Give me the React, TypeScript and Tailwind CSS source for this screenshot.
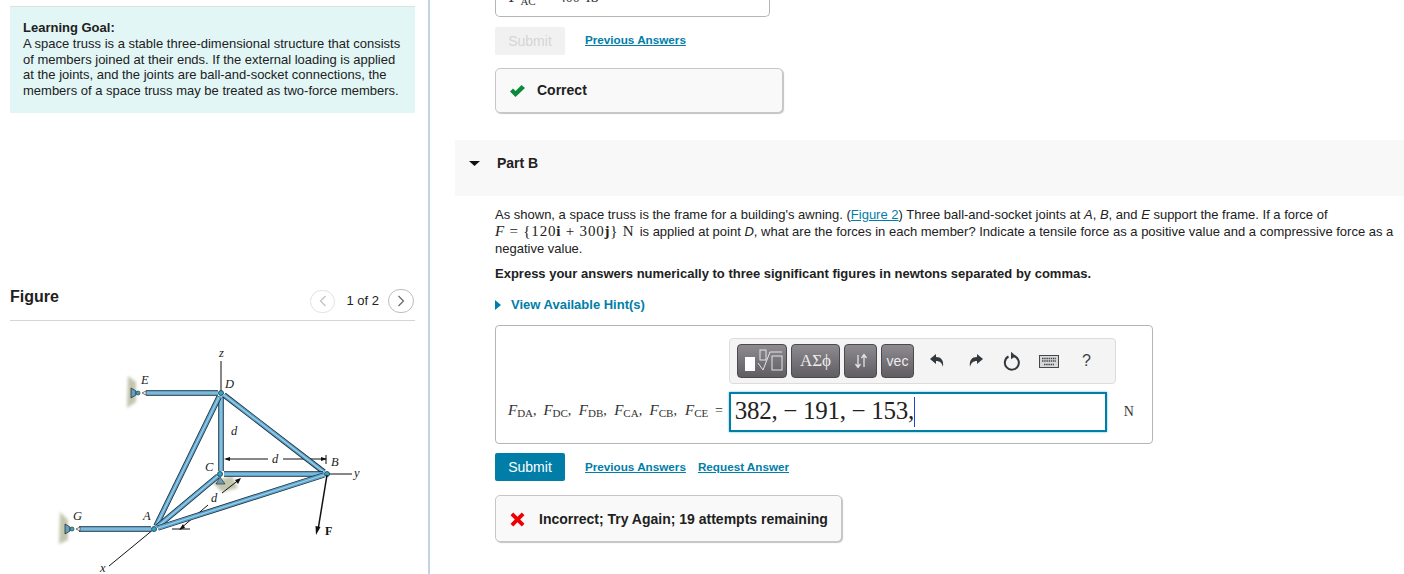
const sans = "font-['Liberation_Sans',Arial,sans-serif]";

function Truss() {
  const bars = [
    [146, 393, 218, 393],
    [221, 396, 221, 471],
    [224, 395, 324, 472],
    [219, 397, 156, 526],
    [218, 476, 157, 527],
    [224, 474, 323, 474],
    [158, 528, 324, 475],
    [79, 529, 151, 529],
  ];
  const joints = [
    [221, 393],
    [220, 474],
    [327, 474],
    [154, 529],
  ];
  // svg sits at page offset (0, 340)
  return (
    <svg width="428" height="234" viewBox="0 340 428 234" className="block">
      <defs>
        <filter id="blur" x="-50%" y="-50%" width="200%" height="200%">
          <feGaussianBlur stdDeviation="1.5" />
        </filter>
      </defs>
      <path d="M128 376 L136 382 L136 402 L127 408 Z" fill="#c3c5ad" filter="url(#blur)" />
      <path d="M60 512 L68 520 L68 540 L59 544 Z" fill="#c3c5ad" filter="url(#blur)" />
      <path d="M212 482 L232 476 L238 488 L222 492 Z" fill="#c3c5ad" filter="url(#blur)" />
      <g stroke="#111" strokeWidth="1" fill="none">
        <path d="M221 361 V393" />
        <path d="M327 474 H352" />
        <path d="M154 529 L109 566" />
        <path d="M226 459 H268 M283 459 H326 M326 455 V464" />
        <path d="M172 529 H190" />
        <path d="M222 493 L240 479" />
        <path d="M208 505 L180 529" />
      </g>
      {bars.map(([x1, y1, x2, y2], i) => (
        <g key={i}>
          <line x1={x1} y1={y1} x2={x2} y2={y2} stroke="#15262f" strokeWidth="5.5" />
          <line x1={x1} y1={y1} x2={x2} y2={y2} stroke="#5ba3cd" strokeWidth="4" />
          <line x1={x1} y1={y1} x2={x2} y2={y2} stroke="#a3d0e8" strokeWidth="1.2" />
        </g>
      ))}
      <path d="M131 388 L136 391 L136 395 L131 398 Z" fill="#5f9fc0" stroke="#222" strokeWidth="0.7" />
      <path d="M65 524 L70 527 L70 531 L65 534 Z" fill="#5f9fc0" stroke="#222" strokeWidth="0.7" />
      <circle cx="138" cy="393" r="2" fill="#3aa3c0" stroke="#222" strokeWidth="0.6" />
      <circle cx="72" cy="529" r="2" fill="#3aa3c0" stroke="#222" strokeWidth="0.6" />
      <path d="M142 393 L146 391 V395 Z M76 529 L80 527 V531 Z" fill="#fff" stroke="#222" strokeWidth="0.6" />
      <path d="M216 484 L220 477 L225 484 Z" fill="#6d9db8" stroke="#222" strokeWidth="0.6" />
      {joints.map(([x, y], i) => (
        <circle key={i} cx={x} cy={y} r="2.5" fill="#2ba9cc" stroke="#16323d" strokeWidth="0.8" />
      ))}
      <path d="M327 475 L318 530" stroke="#111" strokeWidth="1.5" />
      <path d="M316 535 L315.5 526 L320.5 527 Z" fill="#111" />
      <path d="M224 459 L230 457 V461 Z M327 459 L321 457 V461 Z" fill="#111" />
      <path d="M241 478 L235 480 L238 484 Z M179 530 L185 528 L183 524 Z" fill="#111" />
      <g fontFamily="Liberation Serif, serif" fontStyle="italic" fontSize="12.5" fill="#222">
        <text x="219" y="357">z</text>
        <text x="141" y="384">E</text>
        <text x="225" y="388">D</text>
        <text x="231" y="435">d</text>
        <text x="272" y="463">d</text>
        <text x="205" y="471">C</text>
        <text x="331" y="466">B</text>
        <text x="354" y="477">y</text>
        <text x="211" y="502">d</text>
        <text x="143" y="520">A</text>
        <text x="73" y="520">G</text>
        <text x="100" y="572">x</text>
      </g>
      <text x="325" y="535" fontFamily="Liberation Serif, serif" fontWeight="700" fontSize="12" fill="#111">F</text>
    </svg>
  );
}

function Toolbar() {
  const btn =
    "h-[34px] rounded-[4px] border border-[#4a4a4c] bg-gradient-to-b from-[#8d8b8f] to-[#605e63] text-[#ececec] flex items-center justify-center";
  return (
    <div className="ml-[233px] w-[387px] h-[46px] mt-[12px] rounded-[4px] border border-[#dcdcdc] bg-[#f4f4f4] flex items-center pl-[7px] gap-[4px]">
      <div className={`${btn} w-[50px]`}>
        <svg width="48" height="32" viewBox="0 0 48 32" className="block">
          <rect x="7" y="12" width="10" height="14" fill="#fff" />
          <rect x="22" y="5" width="6" height="10" fill="none" stroke="#e4e4e4" />
          <path d="M20 18 L25 25 L32 7 H44" fill="none" stroke="#e4e4e4" />
          <rect x="34" y="11" width="10" height="14" fill="none" stroke="#e4e4e4" />
        </svg>
      </div>
      <div className={`${btn} w-[49px] text-[17px] font-['Liberation_Serif',serif]`}>ΑΣϕ</div>
      <div className={`${btn} w-[33px]`}>
        <svg width="14" height="16" viewBox="0 0 14 16" fill="none" stroke="#e4e4e4" strokeWidth="1.3">
          <path d="M4 2 V14 M1.5 11 L4 14.5 L6.5 11 M10 14 V2 M7.5 5 L10 1.5 L12.5 5" />
        </svg>
      </div>
      <div className={`${btn} w-[33px] text-[14px] ${sans}`}>vec</div>
      <svg width="16" height="16" viewBox="0 0 16 16" className="ml-[11px]" fill="#33383d">
        <path d="M1 6 L7 1 V4 C12 4 15 7 14 14 C13 10 11 8 7 8 V11 Z" />
      </svg>
      <svg width="16" height="16" viewBox="0 0 16 16" className="ml-[19px]" fill="#33383d">
        <path d="M15 6 L9 1 V4 C4 4 1 7 2 14 C3 10 5 8 9 8 V11 Z" />
      </svg>
      <svg width="18" height="20" viewBox="0 0 18 20" className="ml-[15px]" fill="none" stroke="#33383d" strokeWidth="2">
        <path d="M5.5 5.5 A7 7 0 1 0 11 5" />
        <path d="M8 1 L12.5 5 L8 8" fill="#33383d" strokeWidth="0.5" />
      </svg>
      <svg width="20" height="13" viewBox="0 0 20 13" className="ml-[14px]">
        <rect x="0.5" y="0.5" width="19" height="12" fill="#d8d8d8" stroke="#44484c" />
        <path d="M3 3.5 H17 M3 6 H17 M5 9.5 H15" stroke="#44484c" strokeWidth="1.3" strokeDasharray="1.5 0.7" />
      </svg>
      <span className={`ml-[19px] text-[16px] text-[#3a3f44] ${sans}`}>?</span>
    </div>
  );
}

function Sub({ b, last }: { b: string; last?: boolean }) {
  return (
    <span className={last ? "inline-block w-[30px]" : "inline-block w-[35.4px]"}>
      <i className="text-[15px]">F</i>
      <span className="text-[11px] relative top-[2px]">{b}</span>
      {last ? "" : ","}
    </span>
  );
}

function Link({ children }: { children: string }) {
  return <a className="text-[11.7px] font-bold text-[#007ea8] underline leading-none">{children}</a>;
}

export default function App() {
  return (
    <div className={`w-[1404px] h-[574px] overflow-hidden flex bg-white text-[#212121] ${sans}`}>
      <aside className="w-[430px] shrink-0 border-r-2 border-[#c3d3e6] pl-[10px] pr-[13px] pt-[6px]">
        <div className="h-[107px] bg-[#e2f6f6] border-t border-[#d8e4e4] pl-[13px] pr-2 pt-[13px] text-[13px] leading-[15.8px]">
          <p className="font-bold">Learning Goal:</p>
          <p>
            A space truss is a stable three-dimensional structure that consists of members joined at their ends. If the
            external loading is applied at the joints, and the joints are ball-and-socket connections, the members of a
            space truss may be treated as two-force members.
          </p>
        </div>
        <div className="mt-[174px] h-[34px] flex items-start justify-between border-b border-[#d5d5d5]">
          <h2 className="text-[16px] font-bold leading-[19px]">Figure</h2>
          <div className="flex items-center text-[13px] mt-[2px] pr-px">
            <span className="w-[25px] h-[23px] rounded-full border border-[#e2e2e2] flex items-center justify-center">
              <svg width="8" height="12" viewBox="0 0 8 12" fill="none" stroke="#c0c0c0" strokeWidth="1.2">
                <path d="M6.5 1 L1.5 6 L6.5 11" />
              </svg>
            </span>
            <span className="ml-[11px] mr-[9px]">1 of 2</span>
            <span className="w-[26px] h-[24px] rounded-full border border-[#bdbdbd] flex items-center justify-center">
              <svg width="8" height="12" viewBox="0 0 8 12" fill="none" stroke="#666" strokeWidth="1.2">
                <path d="M1.5 1 L6.5 6 L1.5 11" />
              </svg>
            </span>
          </div>
        </div>
        <div className="-ml-[10px] mt-[19px]">
          <Truss />
        </div>
      </aside>

      <main className="flex-1 pl-[25px]">
        <div className="ml-[40px] w-[275px] h-[17px] border border-t-0 border-[#b5b5b5] rounded-b-[5px] overflow-hidden pl-[13px]">
          <div className="-mt-[13px] flex items-baseline font-['Liberation_Serif',serif] text-[17px] leading-[20px] text-[#333] whitespace-nowrap">
            <i>F</i>
            <span className="text-[11px] relative top-[3px] ml-[1px]">AC</span>
            <span className="ml-[23px] text-[14px]">400</span>
            <span className="ml-[6px] text-[17px]">lb</span>
          </div>
        </div>

        <div className="ml-[40px] mt-[10px] flex items-center h-[28px]">
          <span className="w-[70px] h-[28px] rounded-[2px] bg-[#f1f1f1] text-[#d5d5d5] text-[14px] flex items-center justify-center">
            Submit
          </span>
          <span className="ml-[20px] mb-[4px]">
            <Link>Previous Answers</Link>
          </span>
        </div>

        <div className="ml-[40px] mt-[13px] w-[288px] h-[45px] rounded-[5px] border border-[#c6c6c6] bg-[#f9f9f9] shadow-[1px_1px_1px_#c4c4c4] flex items-center pl-[14px] text-[14px] font-bold">
          <svg width="15" height="12" viewBox="0 0 15 12" className="mr-[12px]">
            <path d="M0 6.5 L3 3.5 L5.5 6 L11.5 0 L15 3 L5.5 12 Z" fill="#0b8a3b" />
          </svg>
          Correct
        </div>

        <div className="mt-[27px] h-[56px] bg-[#f8f8f8] flex pt-[13px] text-[14px] font-bold">
          <svg width="11" height="5" viewBox="0 0 11 5" className="ml-[14px] mr-[17px] mt-[8px]">
            <path d="M0 0 H11 L5.5 5 Z" fill="#111" />
          </svg>
          Part B
        </div>

        <div className="ml-[40px] mt-[10px] text-[13px] leading-[17px] w-[905px]">
          <p>
            As shown, a space truss is the frame for a building's awning. (
            <span className="text-[#007ea8] underline">Figure 2</span>) Three ball-and-socket joints at <i>A</i>,{" "}
            <i>B</i>, and <i>E</i> support the frame. If a force of
            <br />
            <span className="inline-block w-[141px] whitespace-nowrap font-['Liberation_Serif',serif] text-[15px] leading-none tracking-[0.8px]">
              <i>F</i> = {"{"}120<b>i</b> + 300<b>j</b>
              {"}"} N
            </span>{" "}
            is applied at point <i>D</i>, what are the forces in each member? Indicate a tensile force as a positive
            value and a compressive force as a negative value.
          </p>
          <p className="mt-[8px] font-bold">Express your answers numerically to three significant figures in newtons separated by commas.</p>
          <div className="mt-[15px] flex items-center text-[13px] font-bold text-[#007ea8] leading-[16px]">
            <svg width="6" height="10" viewBox="0 0 6 10" className="mr-[10px]">
              <path d="M0 0 L6 5 L0 10 Z" fill="#007ea8" />
            </svg>
            View Available Hint(s)
          </div>
        </div>

        <div className="ml-[40px] mt-[12px] w-[658px] h-[119px] border border-[#b5b5b5] rounded-[4px]">
          <Toolbar />
          <div className="mt-[8px] flex items-center pl-[12px] font-['Liberation_Serif',serif] text-[14px] text-[#333]">
            <span className="whitespace-nowrap mb-[4px]">
              <Sub b="DA" />
              <Sub b="DC" />
              <Sub b="DB" />
              <Sub b="CA" />
              <Sub b="CB" />
              <Sub b="CE" last />=
            </span>
            <div className="ml-[6px] w-[378px] h-[40px] border-2 border-[#007ea8] shadow-[0_0_2px_#5fb7d3] flex items-center pl-[4px] pb-[3px] text-[25px] tracking-[-0.3px] leading-none text-[#222] shrink-0">
              382, − 191, − 153,
              <span className="w-px h-[30px] mt-[3px] bg-[#2244cc]" />
            </div>
            <span className="ml-[17px] mb-[2px]">N</span>
          </div>
        </div>

        <div className="ml-[40px] mt-[9px] flex items-center h-[28px]">
          <span className="w-[70px] h-[28px] rounded-[2px] bg-[#007ea8] text-white text-[14px] flex items-center justify-center">
            Submit
          </span>
          <span className="ml-[20px] mb-[2px]">
            <Link>Previous Answers</Link>
          </span>
          <span className="ml-[12px] mb-[2px]">
            <Link>Request Answer</Link>
          </span>
        </div>

        <div className="ml-[40px] mt-[14px] w-[347px] h-[47px] rounded-[5px] border border-[#c6c6c6] bg-[#f9f9f9] shadow-[1px_1px_1px_#c4c4c4] flex items-center pl-[14px] pt-px text-[14px] font-bold">
          <svg width="15" height="15" viewBox="0 0 14 14" className="mr-[14px]">
            <path d="M3 0.5 L7 4.5 L11 0.5 L13.5 3 L9.5 7 L13.5 11 L11 13.5 L7 9.5 L3 13.5 L0.5 11 L4.5 7 L0.5 3 Z" fill="#ee0000" />
          </svg>
          Incorrect; Try Again; 19 attempts remaining
        </div>
      </main>
    </div>
  );
}
